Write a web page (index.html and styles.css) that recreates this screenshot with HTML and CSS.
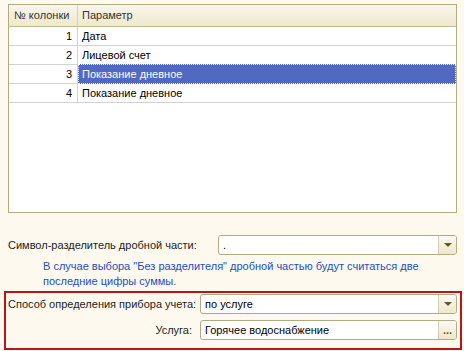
FILE: index.html
```html
<!DOCTYPE html>
<html lang="ru">
<head>
    <meta charset="UTF-8">
    <title>Настройка загрузки</title>
    <link rel="stylesheet" href="styles.css">
</head>
<body>
    <div class="grid">
        <div class="grid-head">
            <div class="cell num">№ колонки</div>
            <div class="cell param">Параметр</div>
        </div>
        <div class="grid-row">
            <div class="cell num">1</div>
            <div class="cell param">Дата</div>
        </div>
        <div class="grid-row">
            <div class="cell num">2</div>
            <div class="cell param">Лицевой счет</div>
        </div>
        <div class="grid-row">
            <div class="cell num">3</div>
            <div class="cell param selected">Показание дневное</div>
        </div>
        <div class="grid-row">
            <div class="cell num">4</div>
            <div class="cell param">Показание дневное</div>
        </div>
    </div>

    <div class="form-row sep-row">
        <label class="label">Символ-разделитель дробной части:</label>
        <div class="field">
            <span class="field-text">.</span>
            <span class="btn drop"><span class="tri"></span></span>
        </div>
    </div>
    <p class="note">В случае выбора "Без разделителя" дробной частью будут считаться две последние цифры суммы.</p>

    <div class="marked">
        <div class="form-row">
            <label class="label">Способ определения прибора учета:</label>
            <div class="field">
                <span class="field-text">по услуге</span>
                <span class="btn drop"><span class="tri"></span></span>
            </div>
        </div>
        <div class="form-row">
            <label class="label right">Услуга:</label>
            <div class="field">
                <span class="field-text">Горячее водоснабжение</span>
                <span class="btn dots">...</span>
            </div>
        </div>
    </div>
</body>
</html>
```

FILE: styles.css
```css
html, body {
    margin: 0;
    background-color: #fdf9ee;
}
body {
    font-family: "Liberation Sans", Arial, sans-serif;
    font-size: 11px;
    color: #000;
    padding: 4px 7px 0 8px;
    height: 351px;
    box-sizing: border-box;
}
.grid {
    height: 209px;
    box-sizing: border-box;
    border: 1px solid #b3a982;
    background-color: #fff;
}
.grid-head, .grid-row {
    display: flex;
}
.grid-head {
    height: 21px;
    border-bottom: 1px solid #c3b995;
    background: linear-gradient(#f8f6ec, #efe8cc);
    color: #333;
}
.grid-head .cell {
    line-height: 21px;
}
.grid-head .num {
    text-align: left;
    border-right: 1px solid #d8d0b0;
    padding: 0 0 0 5px;
}
.grid-row {
    height: 18px;
    border-bottom: 1px solid #cfd3d6;
}
.cell {
    line-height: 18px;
    white-space: nowrap;
    box-sizing: border-box;
}
.num {
    width: 69px;
    text-align: right;
    padding-right: 5px;
    border-right: 1px solid #cfd3d6;
}
.param {
    flex: 1;
    padding-left: 4px;
}
.selected {
    background-color: #5169c1;
    color: #fff;
    outline: 1px dotted #fff;
    outline-offset: -1px;
    margin: -1px 0;
    line-height: 20px;
    height: 20px;
    position: relative;
}
.form-row {
    display: flex;
    align-items: center;
}
.sep-row {
    margin-top: 22px;
}
.label {
    width: 210px;
    flex: none;
    color: #222;
    white-space: nowrap;
}
.field {
    flex: 1;
    height: 20px;
    box-sizing: border-box;
    border: 1px solid #b3a982;
    border-radius: 3px;
    background: #fff;
    display: flex;
}
.field-text {
    flex: 1;
    line-height: 18px;
    padding-left: 4px;
}
.btn {
    width: 17px;
    border-left: 1px solid #d3cbab;
    background: linear-gradient(#fbfaf3, #eee7cb);
    border-radius: 0 2px 2px 0;
    display: flex;
    align-items: center;
    justify-content: center;
}
.tri {
    width: 0;
    height: 0;
    border-left: 4px solid transparent;
    border-right: 4px solid transparent;
    border-top: 4px solid #6b5416;
}
.dots {
    color: #6b5416;
    font-weight: bold;
    font-size: 11px;
    line-height: 18px;
    align-items: flex-end;
}
.note {
    margin: 4px 0 0 35px;
    color: #2250c0;
    line-height: 15px;
}
.marked {
    margin: 2px -5px 0 -4px;
    border: 2px solid #b8141a;
    padding: 1px 3px 8px 2px;
    display: flex;
    flex-direction: column;
    gap: 6px;
}
.marked .label {
    width: 192px;
}
.marked .right {
    text-align: right;
    padding-right: 8px;
    box-sizing: border-box;
}
```
